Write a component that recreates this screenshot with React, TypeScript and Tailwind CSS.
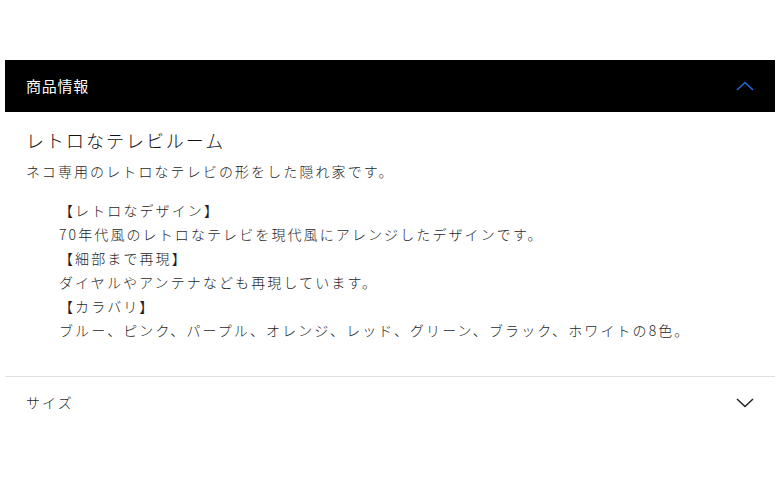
import { useState } from 'react';

const features = [
  { heading: '【レトロなデザイン】', body: '70年代風のレトロなテレビを現代風にアレンジしたデザインです。' },
  { heading: '【細部まで再現】', body: 'ダイヤルやアンテナなども再現しています。' },
  { heading: '【カラバリ】', body: 'ブルー、ピンク、パープル、オレンジ、レッド、グリーン、ブラック、ホワイトの8色。' },
];

function Chevron({ up, className }: { up?: boolean; className?: string }) {
  return (
    <svg width="18" height="10" viewBox="0 0 18 10" fill="none" className={className}>
      <path
        d={up ? 'M1 9L9 1.5L17 9' : 'M1 1L9 8.5L17 1'}
        stroke="currentColor"
        strokeWidth="1.5"
      />
    </svg>
  );
}

export default function App() {
  // accordion state
  const [infoOpen, setInfoOpen] = useState(true);
  const [sizeOpen, setSizeOpen] = useState(false);

  return (
    <div
      className="min-h-[493px] bg-white pt-[60px] px-[5px] text-[#1f1f1f]"
      style={{ fontFamily: '"Noto Sans CJK JP", "Noto Sans", sans-serif' }}
    >
      {/* 商品情報 */}
      <button
        onClick={() => setInfoOpen(!infoOpen)}
        className="flex h-[52px] w-full items-center justify-between bg-black pl-[21px] pr-[21px] text-white"
      >
        <span className="text-[15px] tracking-[0.05em]">商品情報</span>
        <Chevron up={infoOpen} className="text-[#1a6fe0]" />
      </button>

      {infoOpen && (
        <div className="pl-[21px] pt-[14px] pb-[34px] font-light">
          <h2 className="text-[18px] leading-[28px] tracking-[0.11em] text-[#111]">レトロなテレビルーム</h2>
          <p className="mt-[5px] text-[14px] leading-[24px] tracking-[0.15em]">
            ネコ専用のレトロなテレビの形をした隠れ家です。
          </p>
          <div className="mt-[15px] pl-[33px] text-[14px] leading-[24px] tracking-[0.15em]">
            {features.map((f) => (
              <div key={f.heading}>
                <p>{f.heading}</p>
                <p>{f.body}</p>
              </div>
            ))}
          </div>
        </div>
      )}

      {/* サイズ */}
      <button
        onClick={() => setSizeOpen(!sizeOpen)}
        className="flex h-[52px] w-full items-center justify-between border-t border-[#e0e0e0] pl-[21px] pr-[21px] font-light"
      >
        <span className="text-[14px] tracking-[0.15em]">サイズ</span>
        <Chevron up={sizeOpen} className="text-[#222]" />
      </button>
    </div>
  );
}
